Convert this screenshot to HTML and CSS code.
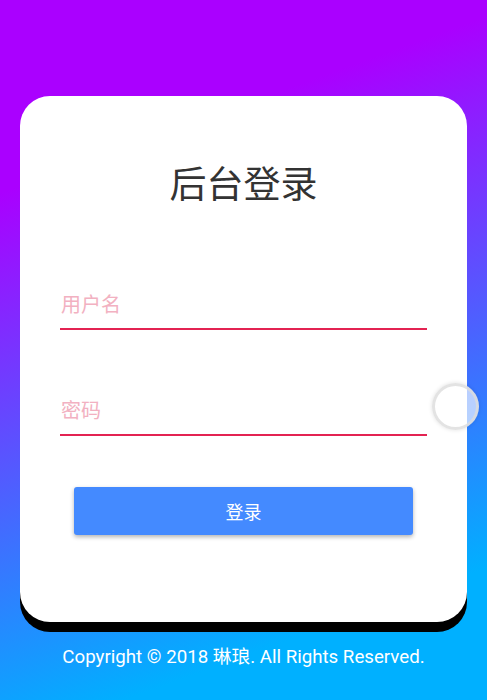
FILE: index.html
```html
<!DOCTYPE html>
<html lang="zh-CN">
<head>
<meta charset="utf-8">
<title>后台登录</title>
<link rel="stylesheet" href="styles.css">
</head>
<body>
<div class="page">
  <main class="card">
    <h1 class="title">后台登录</h1>
    <form class="form">
      <label class="field field-user"><input class="input" type="text" placeholder="用户名"></label>
      <label class="field field-pass"><input class="input" type="password" placeholder="密码"></label>
      <button class="btn" type="button">登录</button>
    </form>
  </main>
  <footer class="footer">Copyright © 2018 琳琅. All Rights Reserved.</footer>
</div>
<div class="float-ball"></div>
</body>
</html>
```
FILE: styles.css
```css
html, body {
  margin: 0;
  padding: 0;
}
body {
  width: 487px;
  height: 700px;
  overflow: hidden;
  position: relative;
  background: linear-gradient(160deg, #aa00ff 22%, #00b0ff 85%);
  font-family: "Noto Sans CJK SC", "Noto Sans", sans-serif;
}
.page {
  padding: 96px 20px 0;
  display: flex;
  flex-direction: column;
}
.card {
  background: #fff;
  border-radius: 30px;
  box-shadow: 0 10px 0 #000;
  padding: 62px 40px 87px;
}
.title {
  margin: 0;
  font-size: 37px;
  line-height: 48px;
  font-weight: 400;
  color: #333;
  text-align: center;
}
.form {
  display: flex;
  flex-direction: column;
  margin-top: 84px;
}
.field {
  display: block;
  border-bottom: 2px solid #e32352;
  padding-bottom: 10px;
}
.field-pass {
  margin-top: 66px;
}
.input {
  display: block;
  width: 100%;
  box-sizing: border-box;
  border: 0;
  outline: 0;
  padding: 0 0 0 1px;
  margin: 0;
  height: 28px;
  font-family: "Noto Sans CJK SC", sans-serif;
  font-size: 20px;
  line-height: 28px;
  background: transparent;
}
.input::placeholder {
  color: #f2b1c1;
  opacity: 1;
}
.btn {
  margin: 51px 14px 0;
  height: 48px;
  border: 0;
  border-radius: 3px;
  background: #448aff;
  color: #fff;
  font-family: "Noto Sans CJK SC", sans-serif;
  font-size: 18px;
  box-shadow: 0 2px 4px rgba(0, 0, 0, 0.3);
}
.footer {
  margin-top: 23px;
  text-align: center;
  color: #fff;
  font-family: Roboto, "Noto Sans CJK SC", sans-serif;
  font-size: 18.7px;
  line-height: 24px;
}
.float-ball {
  position: absolute;
  left: 432px;
  top: 383px;
  width: 47px;
  height: 47px;
  box-sizing: border-box;
  border-radius: 50%;
  border: 3px solid rgba(220, 220, 220, 0.8);
  background: rgba(255, 255, 255, 0.65);
  box-shadow: 0 0 4px rgba(0, 0, 0, 0.12);
}
```
